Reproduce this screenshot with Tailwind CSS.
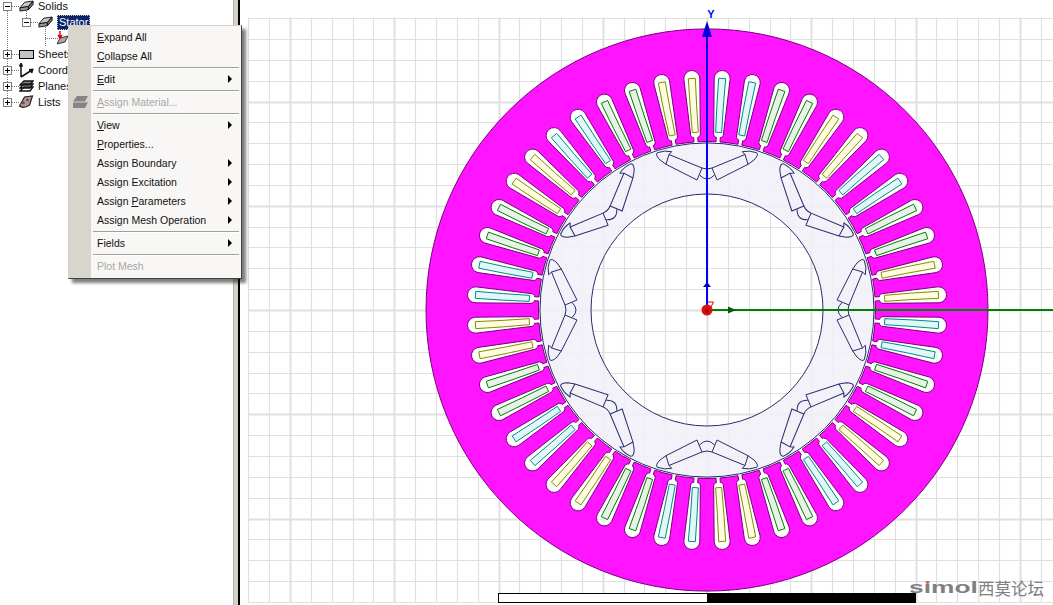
<!DOCTYPE html>
<html lang="en">
<head>
    <meta charset="UTF-8">
    <title>Maxwell Stator Model</title>
    <script src="https://cdn.jsdelivr.net/npm/@tailwindcss/browser@4"></script>
</head>
<body class="bg-white">
<div class="relative flex h-[605px] w-[1053px] overflow-hidden bg-white font-['Liberation_Sans',sans-serif] text-[11px] text-[#111]">

    <!-- shared tree icons -->
    <svg class="absolute h-0 w-0">
        <symbol id="solid" viewBox="0 0 16 12">
            <path d="M1 8 L6 2 L15 .7 L10 6.5 Z" fill="#c8c8c8" stroke="#111"/>
            <path d="M1 8 L10 6.5 V10 L1 11.4 Z" fill="#9a9a9a" stroke="#111"/>
            <path d="M10 6.5 L15 .7 V4.4 L10 10 Z" fill="#707070" stroke="#111"/>
        </symbol>
    </svg>

    <!-- project tree -->
    <aside class="relative w-[233px] shrink-0 overflow-hidden bg-white">
        <svg class="absolute left-0 top-0 h-[120px] w-[70px]" fill="none" stroke="#777" stroke-dasharray="1 1">
            <path d="M7.5 11 V102 M12 6.5 H19 M26.5 11 V18 M31 22.5 H38 M45.5 27 V46 M45 38.5 H58 M12 54.5 H19 M12 70.5 H19 M12 86.5 H19 M12 102.5 H19"/>
        </svg>
        <div class="relative flex flex-col">
            <div class="mb-[2px] flex h-3 items-center pl-[3px] leading-3">
                <span class="flex h-[9px] w-[9px] items-center justify-center border border-[#808080] bg-white"><span class="h-px w-[5px] bg-black"></span></span>
                <svg class="ml-[7px] h-3 w-[15px]"><use href="#solid"/></svg>
                <span class="ml-[4px]">Solids</span>
            </div>
            <div class="flex h-4 items-center pl-[22px]">
                <span class="flex h-[9px] w-[9px] items-center justify-center border border-[#808080] bg-white"><span class="h-px w-[5px] bg-black"></span></span>
                <svg class="ml-[7px] h-3 w-[15px]"><use href="#solid"/></svg>
                <span class="ml-[4px] flex h-[15px] w-[33px] items-center border border-dotted border-[#ccc] bg-[#0a246a] pl-px text-white">Stator</span>
            </div>
            <div class="flex h-4 items-center pl-[57px]">
                <svg class="h-[14px] w-[12px]" viewBox="0 0 12 14">
                    <path d="M0 13 L3 7 L11 5 L8 11 Z" fill="#a8a8a8" stroke="#111" stroke-width=".8"/>
                    <path d="M3 0 V6 M1 4 L3 7 L5 4" fill="none" stroke="#e00000" stroke-width="1.4"/>
                </svg>
            </div>
            <div class="flex h-4 items-center pl-[3px]">
                <span class="relative flex h-[9px] w-[9px] items-center justify-center border border-[#808080] bg-white"><span class="h-px w-[5px] bg-black"></span><span class="absolute h-[5px] w-px bg-black"></span></span>
                <span class="ml-[7px] h-[9px] w-[15px] border border-black bg-[#c4c4c4]"></span>
                <span class="ml-[4px]">Sheets</span>
            </div>
            <div class="flex h-4 items-center pl-[3px]">
                <span class="relative flex h-[9px] w-[9px] items-center justify-center border border-[#808080] bg-white"><span class="h-px w-[5px] bg-black"></span><span class="absolute h-[5px] w-px bg-black"></span></span>
                <svg class="ml-[7px] h-[15px] w-[15px]" viewBox="0 0 15 15" fill="none" stroke="#111" stroke-width="1.5">
                    <path d="M2 14 V1 M2 14 L13 7 M.5 3.5 L2 .5 L3.5 3.5"/>
                    <path d="M10 7 L13.5 6.5 L12.5 10" stroke-width="1.8"/>
                </svg>
                <span class="ml-[4px]">Coordinate</span>
            </div>
            <div class="flex h-4 items-center pl-[3px]">
                <span class="relative flex h-[9px] w-[9px] items-center justify-center border border-[#808080] bg-white"><span class="h-px w-[5px] bg-black"></span><span class="absolute h-[5px] w-px bg-black"></span></span>
                <svg class="ml-[7px] h-[12px] w-[15px]" viewBox="0 0 15 12" fill="none" stroke="#111" stroke-width="1.4">
                    <path d="M1 5 L5 1 H14 L11 5 Z" fill="#888"/>
                    <path d="M1 8 L5 4 H14 L11 8 Z"/>
                    <path d="M1 11 L5 7 H14 L11 11 Z"/>
                </svg>
                <span class="ml-[4px]">Planes</span>
            </div>
            <div class="flex h-4 items-center pl-[3px]">
                <span class="relative flex h-[9px] w-[9px] items-center justify-center border border-[#808080] bg-white"><span class="h-px w-[5px] bg-black"></span><span class="absolute h-[5px] w-px bg-black"></span></span>
                <svg class="ml-[6px] h-[14px] w-[16px]" viewBox="0 0 15 14">
                    <path d="M1 11 L6 2 L14 1 L11 10 Q5 14 1 11 Z" fill="#a0a0a0" stroke="#222" stroke-width="1.2"/>
                    <circle cx="5" cy="8" r="1.4" fill="#b03030"/>
                    <circle cx="9" cy="5" r="1.4" fill="#b03030"/>
                </svg>
                <span class="ml-[4px]">Lists</span>
            </div>
        </div>
    </aside>

    <!-- splitter -->
    <div class="h-full w-[5px] shrink-0 border-l border-[#b8b5ad] bg-[#d4d0c8]"></div>
    <div class="h-full w-[2px] shrink-0 bg-black"></div>

    <!-- modeler view, coordinates in the svg are page coordinates -->
    <main class="relative flex-1">
        <svg id="view" class="block h-[605px] w-[813px]" viewBox="240 0 813 605"></svg>
    </main>

    <!-- watermark -->
    <div class="absolute left-[909px] top-[578px] flex items-center text-[#808080]">
        <span class="relative w-[69px] origin-left scale-x-[1.55] text-[17px] font-bold leading-5">simol<span class="absolute left-[11px] top-[3px] h-[3px] w-[2px] rounded-full bg-[#e06060]"></span></span>
        <span class="font-['Noto_Sans_CJK_SC',sans-serif] text-[16.5px] leading-5">西莫论坛</span>
    </div>

    <!-- context menu -->
    <div class="absolute left-[68px] top-[25px] z-10 flex w-[174px] border border-t-[#d4d0c8] border-l-[#d4d0c8] border-r-[#404040] border-b-[#404040] bg-[#f8f7f5] text-[10.5px] shadow-[4px_4px_3px_rgba(0,0,0,0.5)]">
        <div class="w-[22px] shrink-0 bg-[#d8d5cd] pl-[4px] pt-[70px]">
            <svg class="h-3 w-[15px]" viewBox="0 0 15 12"><path d="M4 0 H15 L12 5.5 H0 Z M0 6.5 H12 L15 6 L12 12 H0 Z" fill="#858585"/></svg>
        </div>
        <div class="flex-1 py-[2px]">
            <div class="flex h-[19px] items-center pl-[6px]"><span><u>E</u>xpand All</span></div>
            <div class="flex h-[19px] items-center pl-[6px]"><span><u>C</u>ollapse All</span></div>
            <div class="mx-[2px] my-[1px] h-[2px] border-b border-white bg-[#a0a09c]"></div>
            <div class="flex h-[19px] items-center justify-between pl-[6px] pr-[9px]"><span><u>E</u>dit</span><svg class="h-2 w-1 -translate-y-px"><path d="M0 0 L4 4 L0 8 Z"/></svg></div>
            <div class="mx-[2px] my-[1px] h-[2px] border-b border-white bg-[#a0a09c]"></div>
            <div class="flex h-[19px] items-center pl-[6px] text-[#a8a8a8]"><span><u>A</u>ssign Material...</span></div>
            <div class="mx-[2px] my-[1px] h-[2px] border-b border-white bg-[#a0a09c]"></div>
            <div class="flex h-[19px] items-center justify-between pl-[6px] pr-[9px]"><span><u>V</u>iew</span><svg class="h-2 w-1 -translate-y-px"><path d="M0 0 L4 4 L0 8 Z"/></svg></div>
            <div class="flex h-[19px] items-center pl-[6px]"><span><u>P</u>roperties...</span></div>
            <div class="flex h-[19px] items-center justify-between pl-[6px] pr-[9px]"><span>Assign Boundary</span><svg class="h-2 w-1 -translate-y-px"><path d="M0 0 L4 4 L0 8 Z"/></svg></div>
            <div class="flex h-[19px] items-center justify-between pl-[6px] pr-[9px]"><span>Assign Excitation</span><svg class="h-2 w-1 -translate-y-px"><path d="M0 0 L4 4 L0 8 Z"/></svg></div>
            <div class="flex h-[19px] items-center justify-between pl-[6px] pr-[9px]"><span>Assign <u>P</u>arameters</span><svg class="h-2 w-1 -translate-y-px"><path d="M0 0 L4 4 L0 8 Z"/></svg></div>
            <div class="flex h-[19px] items-center justify-between pl-[6px] pr-[9px]"><span>Assign Mesh Operation</span><svg class="h-2 w-1 -translate-y-px"><path d="M0 0 L4 4 L0 8 Z"/></svg></div>
            <div class="mx-[2px] my-[1px] h-[2px] border-b border-white bg-[#a0a09c]"></div>
            <div class="flex h-[19px] items-center justify-between pl-[6px] pr-[9px]"><span>Fields</span><svg class="h-2 w-1 -translate-y-px"><path d="M0 0 L4 4 L0 8 Z"/></svg></div>
            <div class="mx-[2px] my-[1px] h-[2px] border-b border-white bg-[#a0a09c]"></div>
            <div class="flex h-[19px] items-center pl-[6px] text-[#a8a8a8]"><span>Plot Mesh</span></div>
        </div>
    </div>
</div>

<script>
    // Stator drawing: 48 slots, 8 V-magnet poles, centred on the origin of the modeler
    const CX = 707, CY = 310, STEP = 20.85;
    const BORE = 168.5, ROTOR = 167, SHAFT = 116, OUTER = 281;
    let out = "";

    // local (radius, lateral) to page coordinates, angle clockwise from +Y
    function pt(r, t, deg) {
        const a = deg * Math.PI / 180;
        const x = CX + r * Math.sin(a) + t * Math.cos(a);
        const y = CY - r * Math.cos(a) + t * Math.sin(a);
        return x.toFixed(2) + " " + y.toFixed(2);
    }

    // grid
    for (let k = -22; k <= 17; k++) {
        const x = Math.round(CX + k * STEP) + 0.5, major = k % 5 === 0;
        out += `<path d="M${x} 17.5 V602" stroke="#e0e0e0" stroke-width="${major ? 2 : 1.2}"/>`;
    }
    for (let k = -14; k <= 14; k++) {
        const y = Math.round(CY + k * STEP) + 0.5, major = k % 5 === 0;
        out += `<path d="M248 ${y} H1053" stroke="#e0e0e0" stroke-width="${major ? 2 : 1.2}"/>`;
    }

    // stator lamination with the slots cut out of it
    const angles = [];
    for (let i = 0; i < 48; i++) angles.push(3.75 + i * 7.5);
    function slotPath(a, start) {
        return `${start} ${pt(BORE, -2, a)} L${pt(173, -2, a)} L${pt(173, -3, a)} L${pt(175, -4.8, a)} L${pt(232, -8, a)} A8 8 0 0 1 ${pt(232, 8, a)} L${pt(175, 4.8, a)} L${pt(173, 3, a)} L${pt(173, 2, a)} L${pt(BORE, 2, a)}`;
    }
    let inner = "";
    angles.forEach((a, i) => {
        inner += slotPath(a, i === 0 ? "M" : `A${BORE} ${BORE} 0 0 1`) + " ";
    });
    inner += `A${BORE} ${BORE} 0 0 1 ${pt(BORE, -2, angles[0])} Z`;
    const outer = `M${CX - OUTER} ${CY} A${OUTER} ${OUTER} 0 1 1 ${CX + OUTER} ${CY} A${OUTER} ${OUTER} 0 1 1 ${CX - OUTER} ${CY} Z`;

    angles.forEach(a => {
        out += `<path d="${slotPath(a, "M")} Z" fill="#fff" fill-opacity=".65"/>`;
    });
    out += `<path d="${outer} ${inner}" fill="#ff14ff" fill-rule="evenodd" stroke="#7a007a" stroke-width="1"/>`;

    // windings, colours repeat by phase every 6 slots
    const phases = [["#008b8b", "#e2f8f8"], ["#008000", "#e8f2e8"], ["#8a8a00", "#fdfde0"]];
    angles.forEach((a, i) => {
        const [line, fill] = phases[Math.floor(i / 2) % 3];
        const p = [pt(178, -3, a), pt(178, 3, a), pt(204, 3, a), pt(232, 3.5, a), pt(232, -3.5, a), pt(204, -3.5, a)];
        out += `<path d="M${p.join(" L")} Z" fill="${fill}" stroke="${line}" stroke-width="1"/>`;
    });

    // rotor ring with the shaft hole
    const ring = (r) => `M${CX - r} ${CY} A${r} ${r} 0 1 1 ${CX + r} ${CY} A${r} ${r} 0 1 1 ${CX - r} ${CY} Z`;
    out += `<path d="${ring(ROTOR)} ${ring(SHAFT)}" fill="#f0f0f7" fill-opacity=".85" fill-rule="evenodd" stroke="#2a2a6e" stroke-width="1"/>`;

    // V magnets, one pole drawn then turned round 8 times
    const half = "M-47 -150 Q-52 -155 -49.7 -157.3 Q-42 -160 -35.3 -158.3 L-38 -155.5 L-5 -142 L-10 -130 L-41 -145.7 Z M-38 -155.5 L-41 -145.7";
    const halfR = "M47 -150 Q52 -155 49.7 -157.3 Q42 -160 35.3 -158.3 L38 -155.5 L5 -142 L10 -130 L41 -145.7 Z M38 -155.5 L41 -145.7";
    for (let k = 0; k < 8; k++) {
        out += `<g transform="translate(${CX} ${CY}) rotate(${k * 45})" fill="none" stroke="#2a2a6e" stroke-width="1">
            <path d="${half}"/><path d="${halfR}"/>
            <path d="M-5 -142 Q0 -140 5 -142 M-7.5 -135 Q0 -127 7.5 -135"/></g>`;
    }

    // global axes
    out += `<path d="M707 30 V310" stroke="#0000ff" stroke-width="2"/>
        <path d="M707 21 L712 37 H702 Z" fill="#0000e0"/>
        <path d="M707 282 L711 287 H703 Z" fill="#0000c0"/>
        <path d="M707 310 H1053" stroke="#008000" stroke-width="2"/>
        <path d="M736 310 L728 306.5 V313.5 Z" fill="#006000"/>
        <circle cx="707" cy="310" r="5.5" fill="#d81010"/>
        <circle cx="707" cy="311" r="2" fill="#a00000"/>
        <path d="M708 302 H713.5 L711 307" fill="none" stroke="#e00000" stroke-width="1"/>
        <text x="711" y="18" fill="#0000ff" font-family="Liberation Sans" font-size="11" font-weight="bold" text-anchor="middle">Y</text>`;

    // scale bar
    out += `<rect x="498.5" y="593.5" width="417" height="9" fill="#fff" stroke="#000"/>
        <rect x="707" y="593" width="209" height="10" fill="#000"/>`;

    document.getElementById("view").innerHTML = out;
</script>
</body>
</html>
